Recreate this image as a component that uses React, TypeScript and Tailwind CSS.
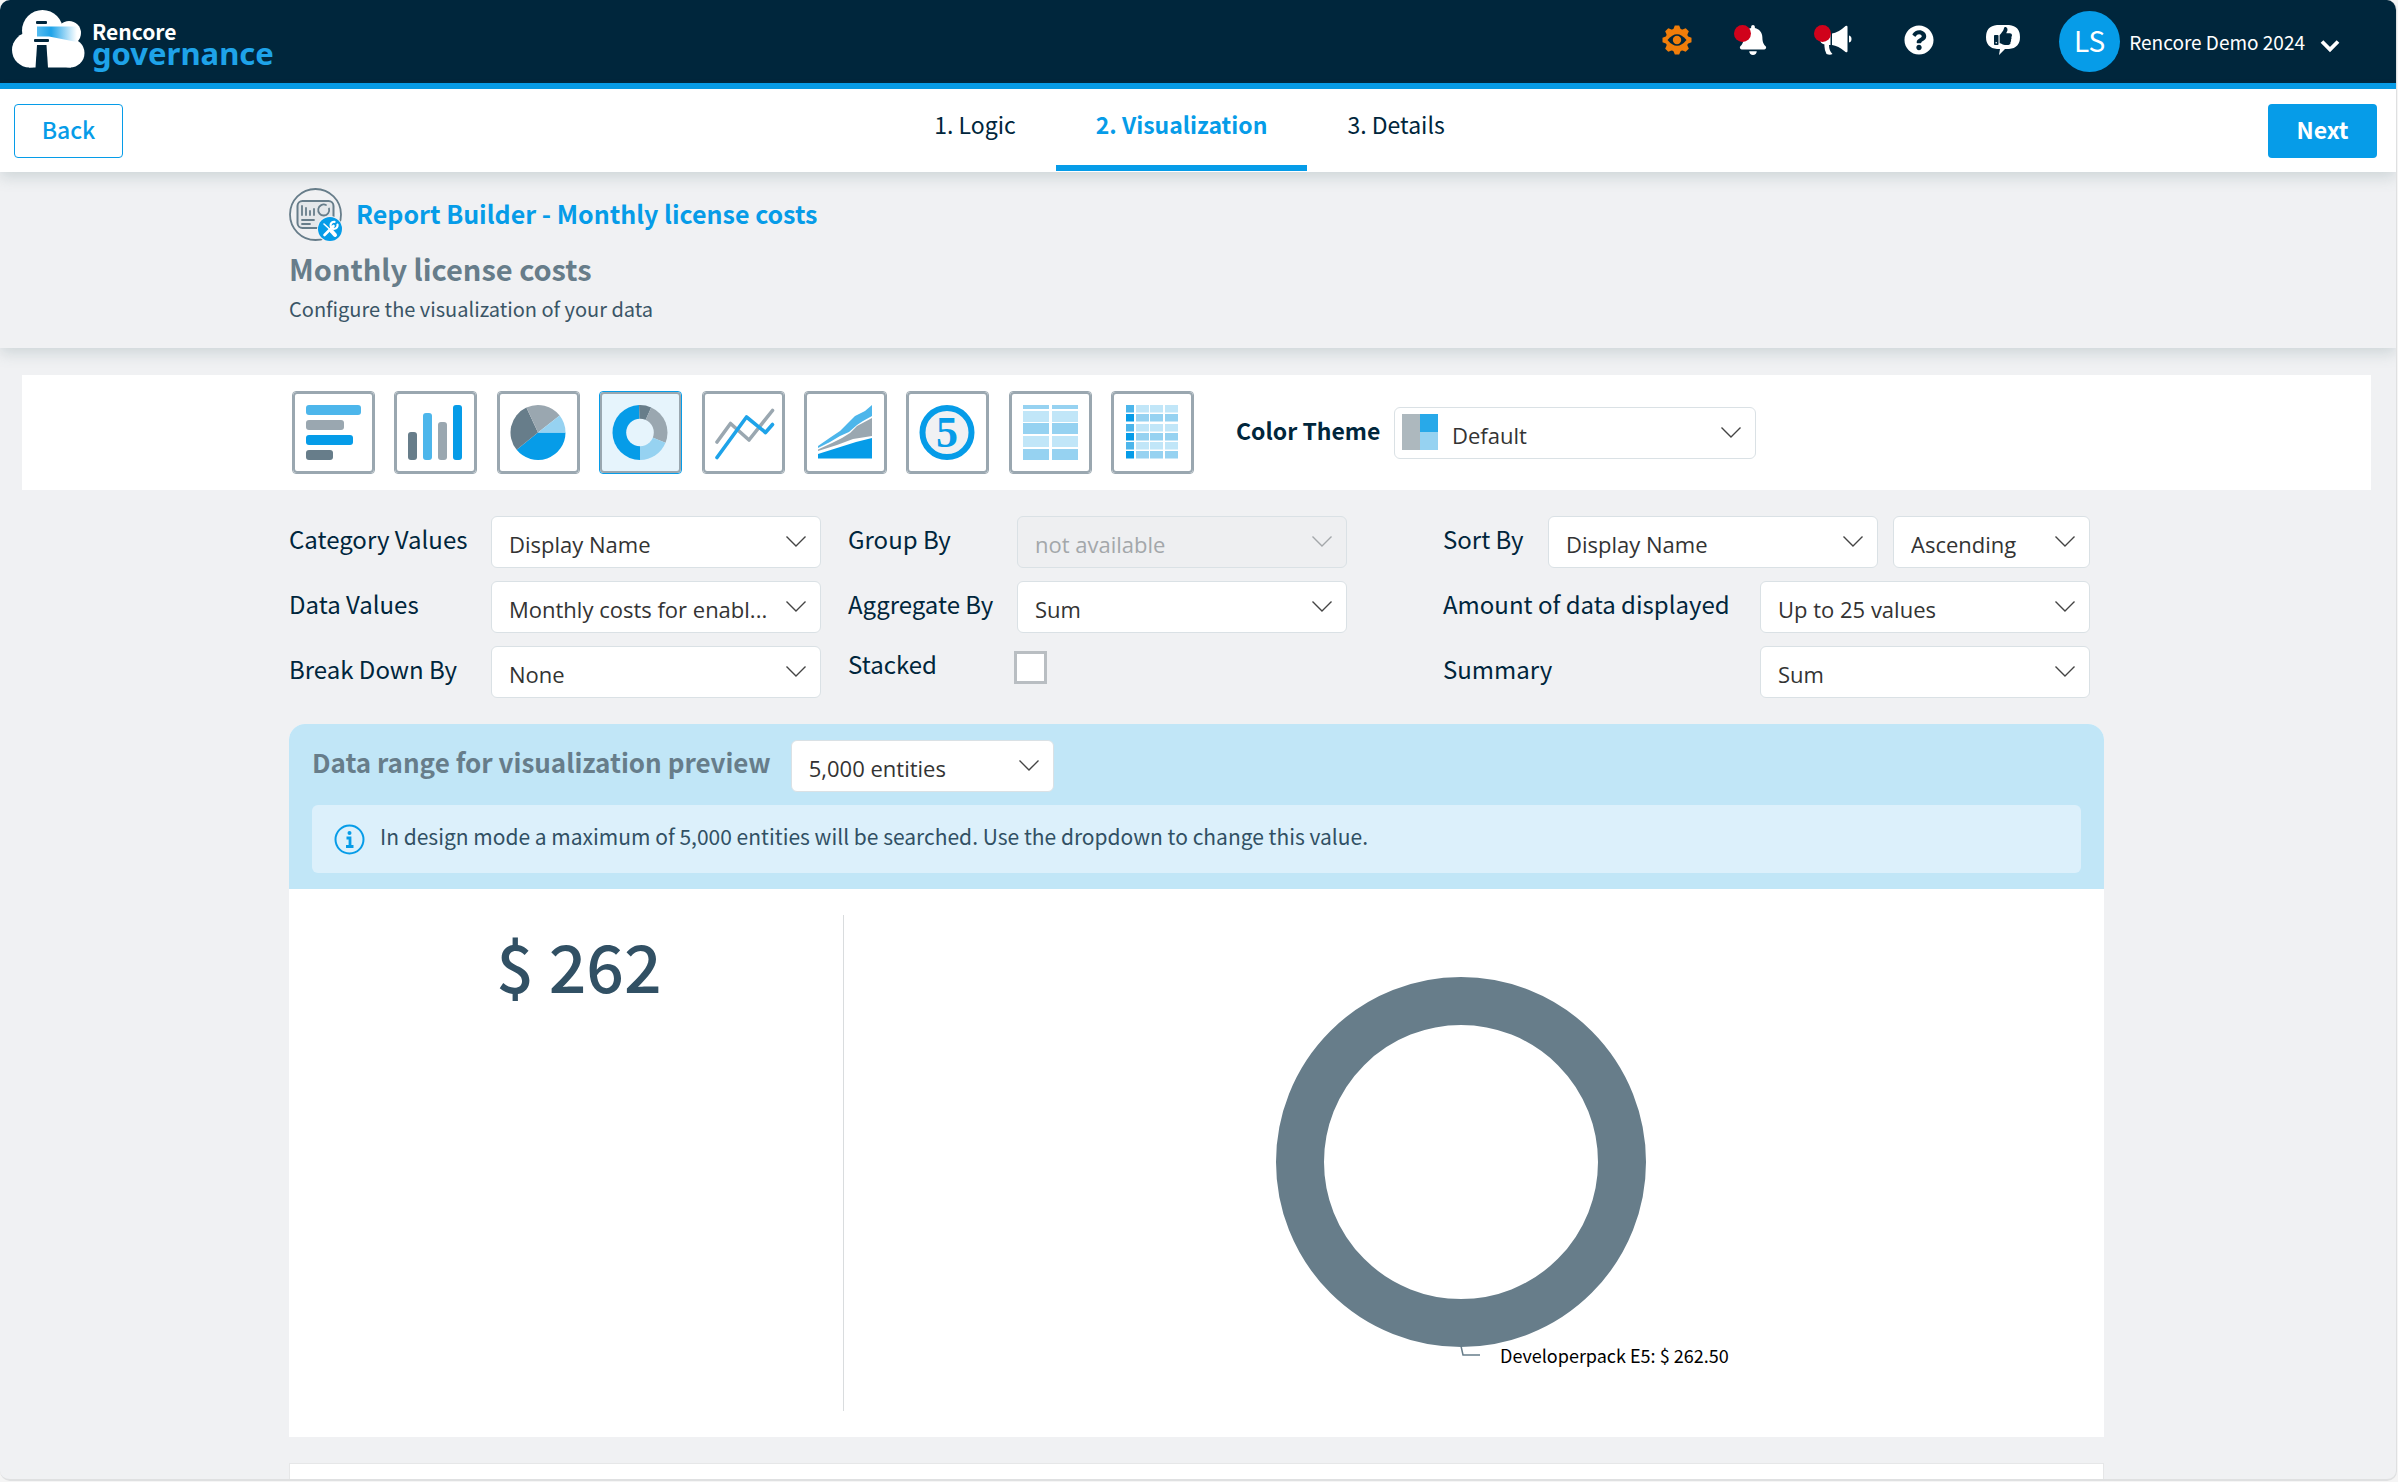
import React, { useState } from 'react';
import clsx from 'clsx';
import { FaBell, FaQuestionCircle, FaThumbsUp } from 'react-icons/fa';

type ChartType = 'bar' | 'column' | 'pie' | 'donut' | 'line' | 'area' | 'number' | 'table' | 'pivot';

const slice = (cx: number, cy: number, r: number, from: number, to: number) => {
  const point = (deg: number) => {
    const rad = (deg * Math.PI) / 180;
    return `${cx + r * Math.cos(rad)} ${cy + r * Math.sin(rad)}`;
  };
  return `M${cx} ${cy}L${point(from)}A${r} ${r} 0 ${to - from > 180 ? 1 : 0} 1 ${point(to)}Z`;
};

const tableRows = [
  { y: 14, h: 4, fill: '#96d2f1' },
  { y: 20, h: 11, fill: '#c1e6f8' },
  { y: 32, h: 11, fill: '#96d2f1' },
  { y: 45, h: 11, fill: '#c1e6f8' },
  { y: 58, h: 11, fill: '#96d2f1' },
];

const pivotRows = [14, 23, 33, 42, 51, 60];

const chartTypes: { value: ChartType; label: string; drawing: React.ReactNode }[] = [
  {
    value: 'bar',
    label: 'Bar chart',
    drawing: (
      <>
        <rect x="14" y="14" width="55" height="10" rx="3" fill="#4db6eb" />
        <rect x="14" y="29" width="38" height="10" rx="3" fill="#9aa7b0" />
        <rect x="14" y="44" width="47" height="10" rx="3" fill="#069ce8" />
        <rect x="14" y="59" width="27" height="10" rx="3" fill="#677d8a" />
      </>
    ),
  },
  {
    value: 'column',
    label: 'Column chart',
    drawing: (
      <>
        <rect x="14" y="41" width="9" height="28" rx="3" fill="#677d8a" />
        <rect x="29" y="22" width="9" height="47" rx="3" fill="#4db6eb" />
        <rect x="44" y="31" width="9" height="38" rx="3" fill="#9aa7b0" />
        <rect x="59" y="14" width="9" height="55" rx="3" fill="#069ce8" />
      </>
    ),
  },
  {
    value: 'pie',
    label: 'Pie chart',
    drawing: (
      <>
        <path d={slice(41, 41.5, 27.5, 0, 141)} fill="#069ce8" />
        <path d={slice(41, 41.5, 27.5, 141, 245)} fill="#677d8a" />
        <path d={slice(41, 41.5, 27.5, 245, 322)} fill="#9aa7b0" />
        <path d={slice(41, 41.5, 27.5, 322, 360)} fill="#96d2f1" />
      </>
    ),
  },
  {
    value: 'donut',
    label: 'Donut chart',
    drawing: (
      <>
        <path d={slice(41, 41.5, 27.5, 90, 268)} fill="#069ce8" />
        <path d={slice(41, 41.5, 27.5, 268, 294)} fill="#677d8a" />
        <path d={slice(41, 41.5, 27.5, 294, 382)} fill="#9aa7b0" />
        <path d={slice(41, 41.5, 27.5, 22, 90)} fill="#96d2f1" />
        <circle cx="41" cy="41.5" r="13.8" fill="#e6f4fc" />
      </>
    ),
  },
  {
    value: 'line',
    label: 'Line chart',
    drawing: (
      <g fill="none" strokeWidth="3.6" strokeLinecap="round" strokeLinejoin="round">
        <path d="M15 51L28.5 32.5L47 49L70.5 19.5" stroke="#9aa7b0" />
        <path d="M15 66.5L44.5 26L63.5 41.5L70.5 33.5" stroke="#1ea3e9" />
      </g>
    ),
  },
  {
    value: 'area',
    label: 'Area chart',
    drawing: (
      <>
        <path d="M14 55L27 46L36 40L43 33L51 25L61 20L68 14V25L59 30L53 34L45 41L36 45L26 51L14 57Z" fill="#4db6eb" />
        <path d="M14 58.5L28 52L38 47L46 42L53 35L68 27V45L49 48L33 54L14 60Z" fill="#9aa7b0" />
        <path d="M14 63L52 51L68 47V67.5H14Z" fill="#069ce8" />
      </>
    ),
  },
  {
    value: 'number',
    label: 'Single number',
    drawing: (
      <>
        <circle cx="41" cy="41.5" r="24.5" fill="#f0f1f3" stroke="#069ce8" strokeWidth="6" />
        <text x="41" y="56" textAnchor="middle" fill="#069ce8" className="font-['Liberation_Serif',serif] text-[44px] font-bold">
          5
        </text>
      </>
    ),
  },
  {
    value: 'table',
    label: 'Table',
    drawing: tableRows.map(r => (
      <React.Fragment key={r.y}>
        <rect x="14" y={r.y} width="26" height={r.h} fill={r.fill} />
        <rect x="43" y={r.y} width="26" height={r.h} fill={r.fill} />
      </React.Fragment>
    )),
  },
  {
    value: 'pivot',
    label: 'Pivot table',
    drawing: pivotRows.map((y, i) => (
      <React.Fragment key={y}>
        <rect x="15" y={y} width="8" height="7.5" fill={i % 2 ? '#069ce8' : '#4db6eb'} />
        {[25, 39, 54].map(x => (
          <rect key={x} x={x} y={y} width="13" height="7.5" fill={i % 2 ? '#96d2f1' : '#c1e6f8'} />
        ))}
      </React.Fragment>
    )),
  },
];

const steps = ['1. Logic', '2. Visualization', '3. Details'];

function Logo() {
  return (
    <svg width="75" height="58" viewBox="11 9 75 58" aria-hidden="true">
      <defs>
        <linearGradient id="beam" x1="0" x2="1">
          <stop offset="0" stopColor="#56bcf0" />
          <stop offset="0.35" stopColor="#1ea3e9" />
          <stop offset="1" stopColor="#ffffff" />
        </linearGradient>
      </defs>
      <g fill="#ffffff">
        <circle cx="42.500" cy="29.500" r="20.500" />
        <circle cx="69" cy="32" r="12" />
        <circle cx="29.500" cy="49" r="17.500" />
        <circle cx="70" cy="52" r="14.500" />
        <rect x="29" y="32" width="42" height="34.500" />
      </g>
      <rect x="36" y="20" width="11" height="3" rx="1" fill="#00263c" />
      <path d="M37 25.500H77V41L49 35.500H37Z" fill="url(#beam)" />
      <rect x="34" y="38" width="15" height="3" rx="1" fill="#00263c" />
      <path d="M37 44H46.500L48 67H35.500Z" fill="#00263c" />
    </svg>
  );
}

function GearEyeIcon() {
  return (
    <svg width="30" height="30" viewBox="0 0 30 30" aria-hidden="true">
      <circle cx="15" cy="15" r="11.500" fill="#f07d0a" />
      {[0, 45, 90, 135, 180, 225, 270, 315].map(deg => (
        <path key={deg} d="M11 5L12.800 0.500H17.200L19 5Z" fill="#f07d0a" transform={`rotate(${deg} 15 15)`} />
      ))}
      <path d="M5.500 15Q15 3.500 24.500 15Q15 26.500 5.500 15Z" fill="#00263c" />
      <circle cx="15" cy="15" r="4.200" fill="#f07d0a" />
    </svg>
  );
}

function MegaphoneIcon() {
  return (
    <svg width="34" height="30" viewBox="0 0 34 30" fill="#ffffff" aria-hidden="true">
      <path d="M27.500 1Q29.500 0 29.500 2V26Q29.500 28 27.500 27Q20 20.500 14 20V8.500Q20 8 27.500 1Z" />
      <path d="M12.500 8.500V20H11Q11 26 14.500 29Q12 30.500 8.500 29Q6 24 6.500 19.500Q2 18.500 2 14Q2 8.500 8 8.500Z" />
      <path d="M31 10.500Q33.500 11 33.500 14Q33.500 17 31 17.500Z" />
    </svg>
  );
}

function FeedbackIcon() {
  return (
    <span className="relative block">
      <svg width="34" height="30" viewBox="0 0 34 30" fill="#ffffff" aria-hidden="true">
        <path d="M11 0H23Q34 1 34 12Q34 23 23 24H19L13 30L14 24H11Q0 23 0 12Q0 1 11 0Z" />
      </svg>
      <FaThumbsUp className="absolute left-[7px] top-0.5 h-[18px] w-5 text-[#00263c]" />
    </span>
  );
}

function ReportIcon() {
  return (
    <svg width="53" height="53" viewBox="0 0 53 53" fill="none" stroke="#677d8a" aria-hidden="true">
      <circle cx="26.500" cy="26.500" r="25.500" strokeWidth="1.800" />
      <rect x="8.500" y="13" width="36" height="27" rx="5" fill="#e4e7ea" strokeWidth="2" />
      <g strokeWidth="1.800" strokeLinecap="round">
        <path d="M13 18V27M17 20V27M21 23V27M25 21V27M13 32H25M13 36H21" />
        <path d="M37 17A5.500 5.500 0 1 0 40 20.500" />
      </g>
      <circle cx="41" cy="41" r="13" fill="#f0f1f3" stroke="none" />
      <circle cx="41" cy="41" r="12" fill="#069ce8" stroke="none" />
      <g stroke="#ffffff" strokeLinecap="round">
        <path d="M35 36L41 41.500" strokeWidth="1.600" />
        <path d="M42.500 43L46 47" strokeWidth="4" />
        <path d="M35.500 47L44.500 38" strokeWidth="2.600" />
        <path d="M48.500 36.500A3.500 3.500 0 1 1 45.500 33.800" strokeWidth="2.200" />
      </g>
    </svg>
  );
}

function InfoIcon() {
  return (
    <svg width="31" height="31" viewBox="0 0 31 31" fill="none" aria-hidden="true">
      <circle cx="15.500" cy="15.500" r="14" stroke="#069ce8" strokeWidth="2" />
      <circle cx="15.500" cy="9" r="2" fill="#069ce8" />
      <path d="M12.500 14H16V22M12 22.500H19.500" stroke="#069ce8" strokeWidth="2.800" />
    </svg>
  );
}

interface SelectProps {
  id: string;
  value: string;
  className: string;
  ariaLabel?: string;
  disabled?: boolean;
  swatch?: boolean;
}

function Select({ id, value, className, ariaLabel, disabled, swatch }: SelectProps) {
  return (
    <div className={clsx('relative shrink-0', className)}>
      <select
        id={id}
        aria-label={ariaLabel}
        disabled={disabled}
        defaultValue={value}
        className={clsx(
          "h-[52px] w-full appearance-none rounded-md border border-[#dae1e5] pr-10 pt-1 font-['Open_Sans',sans-serif] text-[22px] leading-8",
          swatch ? 'pl-[57px]' : 'pl-[17px]',
          disabled ? 'bg-[#eeeff1] text-[#a3a7aa] opacity-100' : 'bg-white text-[#333333]'
        )}
      >
        <option>{value}</option>
      </select>
      {swatch && (
        <span className="pointer-events-none absolute left-2 top-[7px] grid h-9 w-9 grid-cols-2 grid-rows-2">
          <span className="row-span-2 bg-[#adb8be]" />
          <span className="bg-[#28a9e9]" />
          <span className="bg-[#96d2f1]" />
        </span>
      )}
      <svg className="pointer-events-none absolute right-[15px] top-5" width="20" height="11" viewBox="0 0 20 11" fill="none" aria-hidden="true">
        <path d="M0.500 0.500L10 10L19.500 0.500" stroke={disabled ? '#a3a7aa' : '#444444'} strokeWidth="1.400" />
      </svg>
    </div>
  );
}

export default function App() {
  const [chart, setChart] = useState<ChartType>('donut');
  const [step, setStep] = useState('2. Visualization');

  return (
    <div className="h-screen overflow-hidden bg-[#f5f5f5] pb-px pr-px font-['Noto_Sans_CJK_SC',sans-serif] text-[#00263c]">
      <div className="flex h-full flex-col overflow-hidden rounded-[10px] border-b-2 border-r border-[#dfe0e1] bg-[#f0f1f3]">
        <header className="flex h-[89px] shrink-0 items-center justify-between border-b-[6px] border-[#069ce8] bg-[#00263c] pl-[11px] pr-14">
          <a href="#" className="flex items-center gap-1.5 pb-1.5">
            <Logo />
            <span className="flex flex-col pt-2">
              <span className="text-[21px] font-bold leading-6 text-white">Rencore</span>
              <span className="-mt-1 font-['Noto_Sans',sans-serif] text-[31px] font-bold leading-7 text-[#1ea3e9]">governance</span>
            </span>
          </a>

          <div className="flex items-center text-white">
            <div className="mb-1 flex items-center">
              <button type="button" aria-label="Settings" className="flex w-16 justify-center">
                <GearEyeIcon />
              </button>
              <button type="button" aria-label="Notifications" className="flex w-[84px] justify-center">
                <span className="relative pl-1">
                  <FaBell className="h-[30px] w-7" />
                  <span className="absolute -left-px top-0 h-[17px] w-[17px] rounded-full bg-[#d0021b]" />
                </span>
              </button>
              <button type="button" aria-label="Announcements" className="flex w-[84px] justify-center">
                <span className="relative">
                  <MegaphoneIcon />
                  <span className="absolute -left-1 top-0 h-[17px] w-[17px] rounded-full bg-[#d0021b]" />
                </span>
              </button>
              <button type="button" aria-label="Help" className="flex w-[84px] justify-center">
                <FaQuestionCircle className="h-[30px] w-[30px]" />
              </button>
              <button type="button" aria-label="Feedback" className="flex w-[84px] justify-center">
                <FeedbackIcon />
              </button>
            </div>
            <button type="button" className="ml-3.5 flex items-center">
              <span className="flex h-[61px] w-[61px] items-center justify-center rounded-full bg-[#069ce8] pb-1 text-[28px] leading-none">LS</span>
              <span className="ml-[9px] text-[19px] leading-6">Rencore Demo 2024</span>
              <svg className="ml-[15px] mt-2" width="20" height="14" viewBox="0 0 20 14" fill="none" aria-hidden="true">
                <path d="M2 2.500L10 10.500L18 2.500" stroke="#ffffff" strokeWidth="3.800" />
              </svg>
            </button>
          </div>
        </header>

        <div className="relative z-20 flex h-[83px] shrink-0 items-center justify-between bg-white pl-3.5 pr-[19px] shadow-[0_5px_14px_rgba(80,115,120,0.22)]">
          <button type="button" className="h-[54px] w-[109px] rounded border border-[#069ce8] bg-white pb-[3px] text-[23px] font-medium leading-8 text-[#069ce8]">
            Back
          </button>
          <nav className="flex h-full pb-px pr-3">
            {steps.map(s => (
              <button
                key={s}
                type="button"
                onClick={() => setStep(s)}
                className={clsx(
                  'h-full border-b-[6px] px-10 pb-[7px] text-[23px] leading-8',
                  s === step ? 'border-[#069ce8] font-bold text-[#069ce8]' : 'border-transparent'
                )}
              >
                {s}
              </button>
            ))}
          </nav>
          <button type="button" className="h-[54px] w-[109px] rounded bg-[#069ce8] pb-[3px] text-[23px] font-bold leading-8 text-white">
            Next
          </button>
        </div>

        <section className="relative z-10 shrink-0 bg-[#f0f1f3] pb-[25px] pr-[3px] pt-4 shadow-[0_5px_14px_rgba(80,115,120,0.22)]">
          <div className="mx-auto max-w-[1815px]">
            <div className="flex items-center gap-3.5">
              <ReportIcon />
              <h1 className="pb-1 text-[25px] font-bold leading-9 text-[#069ce8]">Report Builder - Monthly license costs</h1>
            </div>
            <h2 className="mt-2 text-[29px] font-bold leading-[38px] text-[#677d8a]">Monthly license costs</h2>
            <p className="mt-2 text-xl leading-7 text-[#3a5566]">Configure the visualization of your data</p>
          </div>
        </section>

        <main className="shrink-0 pr-[3px]">
          <div className="mx-[22px] mt-[27px] bg-white py-4">
            <div className="mx-auto flex max-w-[1815px] items-center pl-[3px]">
              <div className="flex w-[902px] justify-between">
                {chartTypes.map(t => (
                  <button
                    key={t.value}
                    type="button"
                    aria-label={t.label}
                    aria-pressed={t.value === chart}
                    onClick={() => setChart(t.value)}
                    className={clsx(
                      'h-[83px] w-[83px] rounded border',
                      t.value === chart ? 'border-[#069ce8] bg-[#e6f4fc]' : 'border-[#9aa7b0] bg-white'
                    )}
                  >
                    <svg width="81" height="81" viewBox="1 1 81 81" aria-hidden="true">
                      <rect x="2" y="2" width="79" height="79" rx="3" fill="none" stroke="#9aa7b0" strokeWidth="2" />
                      {t.drawing}
                    </svg>
                  </button>
                ))}
              </div>
              <label htmlFor="color-theme" className="ml-[42px] w-[158px] pb-1.5 text-[23px] font-bold leading-8">
                Color Theme
              </label>
              <Select id="color-theme" value="Default" className="w-[362px]" swatch />
            </div>
          </div>

          <div className="mx-auto max-w-[1815px]">
            <form className="my-[26px] grid grid-cols-[559fr_595fr_661fr] text-2xl leading-8">
              <div className="flex flex-col gap-[13px]">
                <div className="flex items-center">
                  <label htmlFor="category" className="w-[202px] pb-1.5">Category Values</label>
                  <Select id="category" value="Display Name" className="w-[330px]" />
                </div>
                <div className="flex items-center">
                  <label htmlFor="data-values" className="w-[202px] pb-1.5">Data Values</label>
                  <Select id="data-values" value="Monthly costs for enabl..." className="w-[330px]" />
                </div>
                <div className="flex items-center">
                  <label htmlFor="break-down" className="w-[202px] pb-1.5">Break Down By</label>
                  <Select id="break-down" value="None" className="w-[330px]" />
                </div>
              </div>

              <div className="flex flex-col gap-[13px]">
                <div className="flex items-center">
                  <label htmlFor="group-by" className="w-[169px] pb-1.5">Group By</label>
                  <Select id="group-by" value="not available" className="w-[330px]" disabled />
                </div>
                <div className="flex items-center">
                  <label htmlFor="aggregate-by" className="w-[169px] pb-1.5">Aggregate By</label>
                  <Select id="aggregate-by" value="Sum" className="w-[330px]" />
                </div>
                <div className="flex h-[52px] items-center pb-2.5">
                  <label htmlFor="stacked" className="w-[166px] pb-1.5">Stacked</label>
                  <input id="stacked" type="checkbox" className="h-[33px] w-[33px] appearance-none border-[3px] border-[#b9bec2] bg-white checked:bg-[#069ce8]" />
                </div>
              </div>

              <div className="flex flex-col gap-[13px] pr-3.5">
                <div className="flex items-center">
                  <label htmlFor="sort-by" className="grow pb-1.5">Sort By</label>
                  <Select id="sort-by" value="Display Name" className="w-[330px]" />
                  <Select id="sort-direction" value="Ascending" className="ml-[15px] w-[197px]" ariaLabel="Sort direction" />
                </div>
                <div className="flex items-center">
                  <label htmlFor="amount" className="grow pb-1.5">Amount of data displayed</label>
                  <Select id="amount" value="Up to 25 values" className="w-[330px]" />
                </div>
                <div className="flex items-center">
                  <label htmlFor="summary" className="grow pb-1.5">Summary</label>
                  <Select id="summary" value="Sum" className="w-[330px]" />
                </div>
              </div>
            </form>

            <section className="overflow-hidden rounded-t-2xl bg-white">
              <div className="bg-[#c1e6f7] px-[23px] py-4">
                <div className="flex items-center gap-5">
                  <label htmlFor="data-range" className="pb-2 text-[26px] font-bold leading-9 text-[#677d8a]">
                    Data range for visualization preview
                  </label>
                  <Select id="data-range" value="5,000 entities" className="w-[263px]" />
                </div>
                <div className="mt-[13px] flex h-[68px] items-center gap-[15px] rounded-md bg-[#dcf0fb] px-[22px]">
                  <InfoIcon />
                  <p className="pb-1.5 text-[21px] leading-8 text-[#315064]">
                    In design mode a maximum of 5,000 entities will be searched. Use the dropdown to change this value.
                  </p>
                </div>
              </div>

              <div className="flex p-[26px]">
                <div className="w-[30%] border-r border-[#d9dcde] pt-[17px] text-center text-[66px] font-medium leading-[64px] text-[#315064]">
                  $ 262
                </div>
                <div className="flex grow justify-center">
                  <svg width="640" height="496" viewBox="0 0 640 496" role="img" aria-label="Monthly license costs by display name">
                    <circle cx="320" cy="247" r="161" fill="none" stroke="#677d8a" strokeWidth="48" />
                    <path d="M320 431L322 440H339" fill="none" stroke="#677d8a" strokeWidth="1.500" />
                    <text x="359" y="448" fill="#000000" className="text-lg">
                      Developerpack E5: $ 262.50
                    </text>
                  </svg>
                </div>
              </div>
            </section>

            <section className="mt-[26px] h-16 border border-[#e6e7e8] bg-white" />
          </div>
        </main>
      </div>
    </div>
  );
}
